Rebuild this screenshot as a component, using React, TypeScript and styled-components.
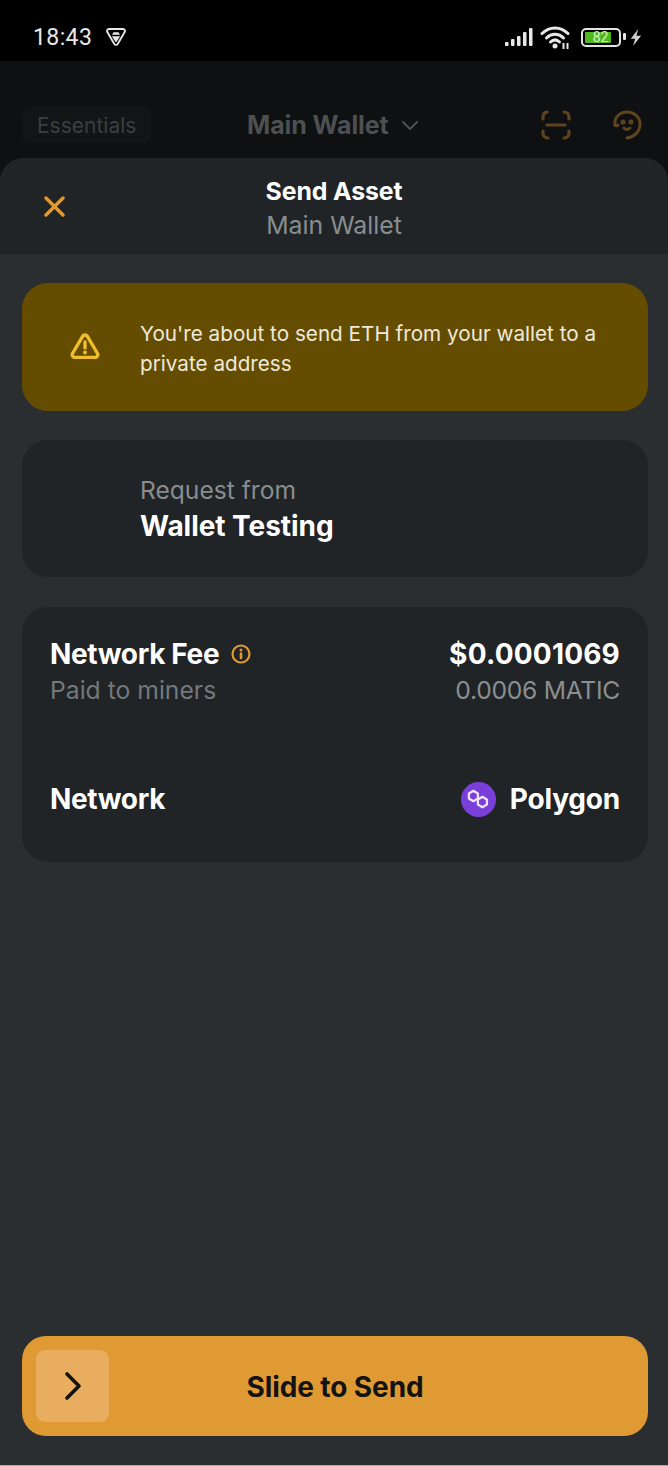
import React from 'react'
import styled, { createGlobalStyle } from 'styled-components'

const GlobalStyle = createGlobalStyle`
  html, body {
    margin: 0;
    padding: 0;
    background: #0e1011;
  }
  * {
    box-sizing: border-box;
  }
`

const Screen = styled.div`
  width: 668px;
  height: 1466px;
  display: flex;
  flex-direction: column;
  overflow: hidden;
  background: #0e1011;
  font-family: Inter, 'Liberation Sans', sans-serif;
`

const StatusBar = styled.div`
  height: 61px;
  flex: none;
  background: #000;
  display: flex;
  align-items: center;
  justify-content: space-between;
  padding: 13px 26px 0 33px;
  color: #e8e8e8;
`

const StatusGroup = styled.div`
  display: flex;
  align-items: center;
`

const Clock = styled.span`
  font-family: Roboto, sans-serif;
  font-size: 23px;
  font-weight: 400;
  letter-spacing: 0.4px;
  margin-right: 14px;
`

const Battery = styled.div`
  width: 40px;
  height: 19px;
  border: 2px solid #e4e4e4;
  border-radius: 5px;
  padding: 2px;
  margin: 0 2px 0 9px;
  display: flex;
`

const BatteryFill = styled.div`
  width: 82%;
  background: #50b81f;
  border-radius: 1px;
  color: #d9f5c8;
  font-family: Roboto, sans-serif;
  font-size: 14px;
  line-height: 11px;
  text-align: center;
  padding-left: 5px;
`

const DimHeader = styled.div`
  height: 97px;
  flex: none;
  position: relative;
  display: flex;
  align-items: center;
  justify-content: space-between;
  padding: 30px 26px 0 22px;
`

const Chip = styled.div`
  height: 36px;
  padding: 2px 15px 0;
  display: flex;
  align-items: center;
  background: #121415;
  border-radius: 6px;
  color: #3b3f41;
  font-size: 21px;
`

const WalletPicker = styled.div`
  position: absolute;
  left: 247px;
  top: 49px;
  display: flex;
  align-items: center;
  gap: 12px;
  color: #4d5052;
  font-size: 25px;
  font-weight: 700;
  line-height: 30px;
  letter-spacing: -0.1px;
`

const DimActions = styled.div`
  display: flex;
  align-items: center;
  gap: 41px;
`

const Sheet = styled.div`
  flex: 1;
  display: flex;
  flex-direction: column;
  background: #2a2e31;
  border-radius: 24px 24px 0 0;
  overflow: hidden;
`

const SheetHeader = styled.div`
  position: relative;
  height: 96px;
  flex: none;
  background: #202426;
  display: flex;
  flex-direction: column;
  align-items: center;
  justify-content: center;
  padding-top: 5px;
`

const CloseButton = styled.div`
  position: absolute;
  left: 44px;
  top: 38px;
  width: 21px;
  height: 21px;
  display: flex;
`

const SheetTitle = styled.div`
  color: #fff;
  font-size: 24.8px;
  font-weight: 700;
  line-height: 33px;
  letter-spacing: -0.1px;
`

const SheetSubtitle = styled.div`
  color: #898d90;
  font-size: 24.8px;
  line-height: 35px;
`

const SheetBody = styled.div`
  flex: 1;
  display: flex;
  flex-direction: column;
  padding: 29px 20px 29px 22px;
`

const Banner = styled.div`
  height: 128px;
  flex: none;
  display: flex;
  align-items: center;
  background: #644d00;
  border-radius: 26px;
  color: #efe9da;
  font-size: 20.7px;
  line-height: 30px;
  padding: 3px 30px 0 0;
`

const IconSlot = styled.div`
  width: 118px;
  flex: none;
  display: flex;
  justify-content: center;
  padding: 0 0 5px 7px;
`

const RequestCard = styled.div`
  height: 137px;
  flex: none;
  margin-top: 29px;
  padding: 33px 0 0 118px;
  background: #202426;
  border-radius: 26px;
`

const RequestLabel = styled.div`
  color: #898d90;
  font-size: 24.6px;
  line-height: 34px;
`

const RequestName = styled.div`
  color: #fff;
  font-size: 28px;
  font-weight: 700;
  line-height: 38px;
  letter-spacing: -0.05px;
`

const FeeCard = styled.div`
  height: 255px;
  flex: none;
  margin-top: 30px;
  padding: 29px 28px 0;
  background: #202426;
  border-radius: 26px;
`

const FeeRow = styled.div`
  display: flex;
  justify-content: space-between;
  align-items: flex-start;
`

const NetworkRow = styled(FeeRow)`
  align-items: center;
  margin-top: 72px;
`

const Stack = styled.div<{ $end?: boolean }>`
  display: flex;
  flex-direction: column;
  align-items: ${({ $end }) => ($end ? 'flex-end' : 'flex-start')};
`

const Strong = styled.div`
  display: flex;
  align-items: center;
  gap: 12px;
  color: #fff;
  font-size: 28px;
  font-weight: 700;
  line-height: 36px;
  letter-spacing: -0.35px;
`

const Amount = styled(Strong)`
  letter-spacing: 0.2px;
`

const NetworkName = styled(Strong)`
  gap: 14px;
  letter-spacing: -0.2px;
`

const Muted = styled.div`
  color: #74787b;
  font-size: 24.7px;
  line-height: 37px;
`

const MutedLight = styled(Muted)`
  color: #8b8f91;
  letter-spacing: -0.3px;
`

const SliderTrack = styled.div`
  position: relative;
  height: 100px;
  flex: none;
  margin-top: auto;
  padding-top: 2px;
  display: flex;
  align-items: center;
  justify-content: center;
  background: #e09a33;
  border-radius: 24px;
  color: #131313;
  font-size: 28px;
  font-weight: 700;
  letter-spacing: -0.1px;
`

const SliderThumb = styled.div`
  position: absolute;
  left: 14px;
  top: 14px;
  width: 73px;
  height: 72px;
  display: flex;
  align-items: center;
  justify-content: center;
  background: #e8ad5e;
  border-radius: 9px;
`

const BottomEdge = styled.div`
  height: 1px;
  flex: none;
  background: #a9abac;
`

const App = () => (
  <Screen>
    <GlobalStyle />
    <StatusBar>
      <StatusGroup>
        <Clock>18:43</Clock>
        <svg width="20" height="20" viewBox="0 0 20 20" fill="none">
          <path d="M3 2h14a2 2 0 0 1 1.700 3L11.700 17a2 2 0 0 1-3.400 0L1.300 5A2 2 0 0 1 3 2z" stroke="#e8e8e8" strokeWidth="1.800" strokeLinejoin="round" />
          <path d="M7.500 5.200h5l1.500 2.600H6z" fill="#e8e8e8" />
          <path d="M5.800 9.200h8.400L10 15.500z" fill="#e8e8e8" />
        </svg>
      </StatusGroup>
      <StatusGroup>
        <svg width="28" height="18" viewBox="0 0 28 18" fill="#e8e8e8">
          <rect x="0" y="14" width="3.500" height="4" rx="1" />
          <rect x="6" y="11" width="3.500" height="7" rx="1" />
          <rect x="12" y="8" width="3.500" height="10" rx="1" />
          <rect x="18" y="4" width="3.500" height="14" rx="1" />
          <rect x="24" y="0" width="3.500" height="18" rx="1" />
        </svg>
        <svg width="32" height="24" viewBox="0 0 32 24" fill="none" style={{ marginLeft: 7 }}>
          <path d="M2 8.500C9.500 1 20.500 1 28 8.500" stroke="#e8e8e8" strokeWidth="3" strokeLinecap="round" />
          <path d="M6.500 13C11.500 8 18.500 8 23.500 13" stroke="#e8e8e8" strokeWidth="3" strokeLinecap="round" />
          <path d="M10.500 17C13.500 14.200 16.500 14.200 19.500 17" stroke="#e8e8e8" strokeWidth="3" strokeLinecap="round" />
          <circle cx="15" cy="21" r="2.500" fill="#e8e8e8" />
          <path d="M23.500 18v6M27.500 18v6" stroke="#e8e8e8" strokeWidth="2" />
        </svg>
        <Battery>
          <BatteryFill>82</BatteryFill>
        </Battery>
        <svg width="4" height="8" viewBox="0 0 4 8" fill="#e4e4e4">
          <rect width="3" height="7" rx="1" />
        </svg>
        <svg width="12" height="19" viewBox="0 0 14 20" fill="#d0d0d0" style={{ marginLeft: 3 }}>
          <path d="M9.500 0 1 11.500h5L3.500 20 13 8H7.500z" />
        </svg>
      </StatusGroup>
    </StatusBar>

    <DimHeader>
      <Chip>Essentials</Chip>
      <WalletPicker>
        Main Wallet
        <svg width="18" height="11" viewBox="0 0 18 11" fill="none">
          <path d="M2 2l7 7 7-7" stroke="#4d5052" strokeWidth="2" strokeLinecap="round" strokeLinejoin="round" />
        </svg>
      </WalletPicker>
      <DimActions>
        <svg width="30" height="30" viewBox="0 0 30 30" fill="none" stroke="#60441f" strokeWidth="3.200" strokeLinecap="round">
          <path d="M2 9V7a5 5 0 0 1 4-5M23 2a5 5 0 0 1 5 5v2M2 21v2a5 5 0 0 0 5 5M28 21v2a5 5 0 0 1-5 5M6 15h18" />
        </svg>
        <svg width="30" height="30" viewBox="0 0 30 30" fill="none" stroke="#60441f" strokeWidth="3" strokeLinecap="round">
          <path d="M3 15C2 7 8 2 15 2c7 0 13 5 13 12 0 8-6 13-13 14" />
          <path d="M3 15c1 1 2 1 3 0M12 18c2 2 4 2 6 0" />
          <circle cx="11" cy="12" r="1" fill="#60441f" />
          <circle cx="19" cy="12" r="1" fill="#60441f" />
        </svg>
      </DimActions>
    </DimHeader>

    <Sheet>
      <SheetHeader>
        <CloseButton>
          <svg width="21" height="21" viewBox="0 0 21 21" fill="none">
            <path d="M2 2l17 17M19 2L2 19" stroke="#e09a33" strokeWidth="3.400" strokeLinecap="round" />
          </svg>
        </CloseButton>
        <SheetTitle>Send Asset</SheetTitle>
        <SheetSubtitle>Main Wallet</SheetSubtitle>
      </SheetHeader>

      <SheetBody>
        <Banner>
          <IconSlot>
            <svg width="30" height="26" viewBox="0 0 30 26" fill="none">
              <path d="M12.600 3.300 2.500 20.500A2.800 2.800 0 0 0 5 24.500h20a2.800 2.800 0 0 0 2.500-4L17.400 3.300a2.800 2.800 0 0 0-4.800 0z" stroke="#f0bd2c" strokeWidth="3.400" strokeLinejoin="round" />
              <path d="M15 9v6" stroke="#f0bd2c" strokeWidth="3.400" strokeLinecap="round" />
              <circle cx="15" cy="19.500" r="1.900" fill="#f0bd2c" />
            </svg>
          </IconSlot>
          <div>You're about to send ETH from your wallet to a private address</div>
        </Banner>

        <RequestCard>
          <RequestLabel>Request from</RequestLabel>
          <RequestName>Wallet Testing</RequestName>
        </RequestCard>

        <FeeCard>
          <FeeRow>
            <Stack>
              <Strong>
                Network Fee
                <svg width="20" height="20" viewBox="0 0 20 20" fill="none">
                  <circle cx="10" cy="10" r="8.500" stroke="#e09a33" strokeWidth="2.200" />
                  <path d="M10 9.500v4.500" stroke="#e09a33" strokeWidth="2.600" strokeLinecap="round" />
                  <circle cx="10" cy="6" r="1.500" fill="#e09a33" />
                </svg>
              </Strong>
              <Muted>Paid to miners</Muted>
            </Stack>
            <Stack $end>
              <Amount>$0.0001069</Amount>
              <MutedLight>0.0006 MATIC</MutedLight>
            </Stack>
          </FeeRow>
          <NetworkRow>
            <Strong>Network</Strong>
            <NetworkName>
              <svg width="35" height="35" viewBox="0 0 35 35" fill="none">
                <circle cx="17.500" cy="17.500" r="17.500" fill="#7b3fd9" />
                <path d="M12.400 8.800 16.900 11.400V16.600L12.400 19.200 7.900 16.600V11.400Z" stroke="#efe4ff" strokeWidth="2.300" strokeLinejoin="round" />
                <path d="M21.400 14.800 25.900 17.400V22.600L21.400 25.200 16.900 22.600V17.400Z" stroke="#efe4ff" strokeWidth="2.300" strokeLinejoin="round" />
              </svg>
              Polygon
            </NetworkName>
          </NetworkRow>
        </FeeCard>

        <SliderTrack>
          <SliderThumb>
            <svg width="18" height="30" viewBox="0 0 18 30" fill="none">
              <path d="M3 3l12 12L3 27" stroke="#131313" strokeWidth="3.600" strokeLinecap="round" strokeLinejoin="round" />
            </svg>
          </SliderThumb>
          Slide to Send
        </SliderTrack>
      </SheetBody>
      <BottomEdge />
    </Sheet>
  </Screen>
)

export default App
